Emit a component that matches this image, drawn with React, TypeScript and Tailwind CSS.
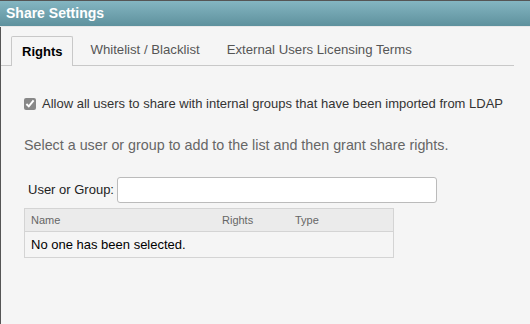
import React from 'react';

export default function App() {
  return (
    <div className="w-[530px] h-[324px] overflow-hidden bg-[#f5f5f5] font-['Liberation_Sans',Arial,sans-serif] flex flex-col border-t border-[#555]">
      {/* Title bar */}
      <div className="h-[26px] bg-gradient-to-b from-[#84b6c2] to-[#5e919d] flex items-center pl-[6px] border-b border-[#e8e8e8]">
        <span className="text-white font-bold text-[14px]">Share Settings</span>
      </div>

      <div className="flex-1 border-l border-[#555] flex flex-col">
        {/* Tabs */}
        <div className="mt-[9px] mr-[16px] flex items-end border-b border-[#c8c8c8] h-[30px]">
          <div className="ml-[10px] h-[30px] -mb-px px-[10px] border border-b-0 border-[#c8c8c8] rounded-t-[2px] bg-[#f5f5f5] flex items-center text-[13px] font-bold text-black">
            Rights
          </div>
          <div className="h-[30px] flex items-center pl-[17px] text-[13.2px] text-[#555]">Whitelist / Blacklist</div>
          <div className="h-[30px] flex items-center pl-[27px] text-[13.2px] text-[#555]">External Users Licensing Terms</div>
        </div>

        {/* Content */}
        <div className="pl-[23px] pt-[28px] flex flex-col">
          <label className="flex items-center gap-[6px] text-[13px] text-[#333]">
            <input type="checkbox" defaultChecked className="w-[12px] h-[12px] m-0 accent-[#888]" />
            <span>Allow all users to share with internal groups that have been imported from LDAP</span>
          </label>

          <div className="mt-[21px] text-[14.3px] text-[#666]">
            Select a user or group to add to the list and then grant share rights.
          </div>

          <div className="mt-[21px] ml-[4px] flex items-center gap-[3px]">
            <span className="text-[13px] text-[#222]">User or Group:</span>
            <input type="text" className="w-[320px] h-[26px] bg-white border border-[#bbb] rounded-[3px] outline-none" />
          </div>

          <div className="mt-[5px] w-[370px] border border-[#d4d4d4]">
            <div className="h-[23px] bg-[#ebebeb] border-b border-[#d4d4d4] flex items-center text-[11px] text-[#666]">
              <span className="pl-[6px] w-[197px]">Name</span>
              <span className="w-[73px]">Rights</span>
              <span>Type</span>
            </div>
            <div className="h-[25px] flex items-center pl-[6px] text-[13px] text-black">
              No one has been selected.
            </div>
          </div>
        </div>
      </div>
    </div>
  );
}
